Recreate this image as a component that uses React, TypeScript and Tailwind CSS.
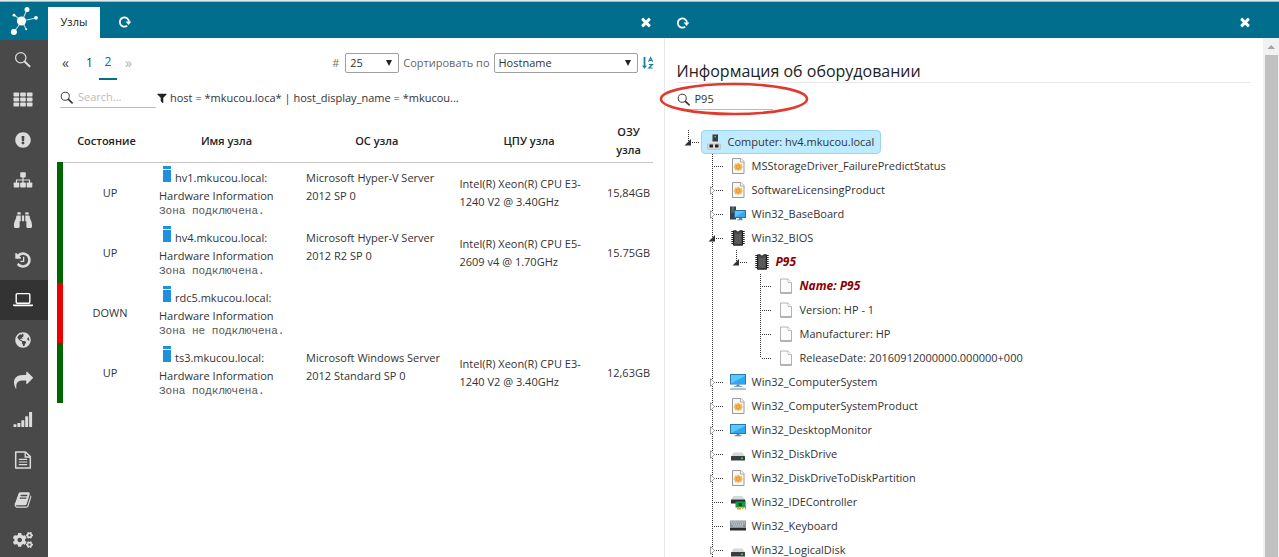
import type { ReactNode } from "react";
import { FaBinoculars, FaCogs, FaExclamationCircle, FaGlobeAmericas } from "react-icons/fa";

/* ---------- glyphs ---------- */

function Glyph({ d, className }: { d: string; className: string }) {
  return (
    <svg viewBox="0 0 1792 1792" fill="currentColor" className={className} aria-hidden="true">
      <path d={d} />
    </svg>
  );
}

const HISTORY =
  "M1664 896q0 156-61 298t-164 245-245 164-298 61q-172 0-327-72.5t-264-204.5q-7-10-6.5-22.5t8.5-20.5l137-138q10-9 25-9 16 2 23 12 73 95 179 147t225 52q104 0 198.5-40.5t163.5-109.5 109.5-163.5 40.5-198.5-40.5-198.5-109.5-163.5-163.5-109.5-198.5-40.5q-98 0-188 35.5t-160 101.5l137 138q31 30 14 69-17 40-59 40h-448q-26 0-45-19t-19-45v-448q0-42 40-59 39-17 69 14l130 129q107-101 244.5-156.5t284.5-55.5q156 0 298 61t245 164 164 245 61 298zm-640-288v448q0 14-9 23t-23 9h-320q-14 0-23-9t-9-23v-64q0-14 9-23t23-9h224v-352q0-14 9-23t23-9h64q14 0 23 9t9 23z";
const TIMES =
  "M1490 1322q0 40-28 68l-136 136q-28 28-68 28t-68-28l-294-294-294 294q-28 28-68 28t-68-28l-136-136q-28-28-28-68t28-68l294-294-294-294q-28-28-28-68t28-68l136-136q28-28 68-28t68 28l294 294 294-294q28-28 68-28t68 28l136 136q28 28 28 68t-28 68l-294 294 294 294q28 28 28 68z";
const FILTER =
  "M1595 295q17 41-14 70l-493 493v742q0 42-39 59-13 5-25 5-27 0-45-19l-256-256q-19-19-19-45v-486l-493-493q-31-29-14-70 17-39 59-39h1280q42 0 59 39z";
const SHARE =
  "M1792 640q0 26-19 45l-512 512q-19 19-45 19t-45-19-19-45v-256h-224q-98 0-175.5 6t-154 21.5-133 42.5-105.5 69.5-80 101-48.5 138.5-17.5 181q0 55 5 123 0 6 2.5 23.5t2.5 26.5q0 15-8.5 25t-23.5 10q-16 0-28-17-7-9-13-22t-13.5-30-10.5-24q-127-285-127-451 0-199 53-333 162-403 875-403h224v-256q0-26 19-45t45-19 45 19l512 512q19 19 19 45z";
const BOOK =
  "M1703 478q40 57 18 129l-275 906q-19 64-76.5 107.5t-122.5 43.5h-923q-77 0-148.5-53.5t-99.5-131.5q-24-67-2-127 0-4 3-27t4-37q1-8-3-21.5t-3-19.5q2-11 8-21t16.5-23.5 16.5-23.5q23-38 45-91.5t30-91.5q3-10 .5-30t-.5-28q3-11 17-28t17-23q21-36 42-92t25-90q1-9-2.5-32t.5-28q4-13 22-30.5t22-22.5q19-26 42.5-84.5t27.5-96.5q1-8-3-25.5t-2-26.5q2-8 9-18t18-23 17-21q8-12 16.5-30.5t15-35 16-36 19.5-32 26.5-23.5 36-11.5 47.5 5.5l-1 3q38-9 51-9h761q74 0 114 56t18 130l-274 906q-36 119-71.5 153.5t-128.5 34.5h-869q-27 0-38 15-11 16-1 43 24 70 144 70h923q29 0 56-15.5t35-41.5l300-987q7-22 5-57 38 15 59 43zm-1064 2q-4 13 2 22.5t20 9.5h608q13 0 25.5-9.5t16.5-22.5l21-64q4-13-2-22.5t-20-9.5h-608q-13 0-25.5 9.5t-16.5 22.5zm-83 256q-4 13 2 22.5t20 9.5h608q13 0 25.5-9.5t16.5-22.5l21-64q4-13-2-22.5t-20-9.5h-608q-13 0-25.5 9.5t-16.5 22.5z";

function Magnifier({ className }: { className: string }) {
  return (
    <svg viewBox="0 0 16 16" fill="none" stroke="currentColor" className={className} aria-hidden="true">
      <circle cx="6" cy="6" r="4.6" strokeWidth="1.1" />
      <path d="M9.6 9.600l4.200 4" strokeWidth="1.800" strokeLinecap="round" />
    </svg>
  );
}

function GridIcon() {
  return (
    <svg viewBox="0 0 20 16" fill="currentColor" className="h-4 w-5" aria-hidden="true">
      {[0.5, 5.5, 10.5].map((y) =>
        [0.5, 7.2, 13.9].map((x) => <rect key={`${x}-${y}`} x={x} y={y} width="5.6" height="4" rx="0.8" />),
      )}
    </svg>
  );
}

function SitemapIcon() {
  return (
    <svg viewBox="0 0 20 16" className="h-4 w-5" aria-hidden="true">
      <path d="M10 5v6M3.5 11V8h13v3" fill="none" stroke="currentColor" strokeWidth="1.2" />
      <g fill="currentColor">
        <rect x="7.2" y="0.2" width="5.6" height="5.2" rx="0.8" />
        <rect x="0.7" y="10.4" width="5.6" height="5.2" rx="0.8" />
        <rect x="7.2" y="10.4" width="5.6" height="5.2" rx="0.8" />
        <rect x="13.7" y="10.4" width="5.6" height="5.2" rx="0.8" />
      </g>
    </svg>
  );
}

function LaptopIcon() {
  return (
    <svg viewBox="0 0 20 16" className="h-4 w-5" aria-hidden="true">
      <rect x="3.2" y="1.6" width="13.600" height="9.600" rx="1" fill="none" stroke="currentColor" strokeWidth="1.400" />
      <path d="M0 12.400h20v1q0 .8-1.200.8H1.200Q0 14.200 0 13.400z" fill="currentColor" />
    </svg>
  );
}

function SignalIcon() {
  return (
    <svg viewBox="0 0 20 16" fill="currentColor" className="h-4 w-5" aria-hidden="true">
      <rect x="0.500" y="12.300" width="3" height="2.700" rx="0.400" />
      <rect x="4.400" y="11" width="3" height="4" rx="0.400" />
      <rect x="8.300" y="8.200" width="3" height="6.800" rx="0.400" />
      <rect x="12.200" y="4.300" width="3" height="10.700" rx="0.400" />
      <rect x="16.100" y="-0.500" width="3" height="15.500" rx="0.400" />
    </svg>
  );
}

function FileTextIcon() {
  return (
    <svg viewBox="0 0 18 18" fill="none" stroke="currentColor" className="size-[18px]" aria-hidden="true">
      <path d="M1.700 1h9.800l4.800 4.600V17H1.700z" strokeWidth="1.500" strokeLinejoin="round" />
      <path d="M11.200 1v5h5" strokeWidth="1.300" />
      <path d="M4.800 8.300h8.400M4.800 11h8.400M4.800 13.700h8.400" strokeWidth="1.200" />
    </svg>
  );
}

function Logo() {
  return (
    <svg viewBox="0 0 28 30" className="h-[30px] w-7" aria-hidden="true">
      <path d="M12 15L17 3.500M12 15L26 12M12 15L4 9M12 15L4 26M12 15L16 23" stroke="#b9dbe4" strokeWidth="1.100" />
      <g fill="#fff">
        <circle cx="11.500" cy="15" r="4.600" />
        <circle cx="17" cy="3.500" r="2.500" />
        <circle cx="26" cy="11.800" r="1.900" />
        <circle cx="4" cy="9.200" r="1.400" />
        <circle cx="3.900" cy="26" r="3" />
        <circle cx="16.200" cy="23.200" r="1" />
      </g>
    </svg>
  );
}

function RefreshIcon() {
  return (
    <svg viewBox="0 0 14 14" className="size-3.5" aria-hidden="true">
      <path d="M9.200 10.700A4.600 4.600 0 1 1 11 6.600" fill="none" stroke="#fff" strokeWidth="1.800" />
      <path d="M7.600 6.500h5.800l-2.900 3.500z" fill="#fff" />
    </svg>
  );
}

function SortIcon() {
  return (
    <svg viewBox="0 0 12 14" className="h-3.5 w-3" fill="none" stroke="#1581a0" aria-hidden="true">
      <path d="M2.500 1v10" strokeWidth="1.800" />
      <path d="M0 9.700h5l-2.500 3z" fill="#1581a0" stroke="none" />
      <path d="M6.500 5.700L8.600 1.500l2.100 4.200M7.200 4.400h2.800" strokeWidth="1.100" />
      <path d="M6.900 8.500h3.500L6.900 12h3.700" strokeWidth="1.200" />
    </svg>
  );
}

/* ---------- tree pictures ---------- */

type Picture = "host" | "class" | "board" | "chip" | "page" | "system" | "monitor" | "disk" | "ide" | "keyboard";

const pictures: Record<Picture, ReactNode> = {
  host: (
    <>
      <rect x="6.500" y="0.500" width="5.500" height="8" fill="#3c3c3c" />
      <rect x="8.500" y="2" width="1.500" height="1.500" fill="#3fd04a" />
      <path d="M3 7.500h9.500l1.800 3v5H1.700v-5z" fill="#e2e2e2" />
      <path d="M1.700 10h12.600v5.300H1.700z" fill="#dcdcdc" stroke="#a5a5a5" strokeWidth="0.500" />
      <rect x="3.500" y="10.500" width="3.500" height="3" fill="#222" />
      <rect x="9" y="10.500" width="3.500" height="3" fill="#222" />
    </>
  ),
  class: (
    <>
      <path d="M2.500.5h8.500l3 3v12H2.500z" fill="#f7f7f7" stroke="#9a9a9a" />
      <path d="M10.500.5v3.500H14" fill="#fff" stroke="#9a9a9a" strokeWidth="0.800" />
      <path d="M8.200 4.500l1.200 1.300 2-.3.300 2 1.200 1.400-1.200 1.400-.3 2-2-.3-1.200 1.300L7 12l-2 .3-.3-2-1.200-1.400 1.200-1.400.3-2 2 .3z" fill="#f2b655" />
      <circle cx="8.200" cy="8.900" r="1.700" fill="none" stroke="#cf9038" strokeWidth="0.800" />
    </>
  ),
  board: (
    <>
      <rect x="0" y="0.500" width="6" height="13" fill="#3d4043" />
      <rect x="2" y="1.500" width="2" height="1" fill="#2fe04f" />
      <path d="M1 4h3.500M1 6h3.500" stroke="#8b8f92" strokeWidth="0.700" />
      <rect x="4.500" y="4.500" width="11" height="7" fill="#5cc4fb" stroke="#2d6f9c" />
      <path d="M5 11l10-6v6z" fill="#37a9f0" />
      <path d="M9 12h3v1.500h-3zM7 13.500h6v.8H7z" fill="#5f86a5" />
    </>
  ),
  chip: (
    <>
      <path d="M2.200 1v14M13.800 1v14" stroke="#222" strokeWidth="1.800" strokeDasharray="1 1" />
      <path d="M3.500.8H6q2 2.800 4 0h2.500v14.400h-9z" fill="#4a4a4a" stroke="#111" strokeWidth="0.900" />
      <path d="M5 4h6v9.500H5z" fill="#5a5a5a" />
    </>
  ),
  page: (
    <>
      <path d="M2.500 1h7.500l3.500 3.500V15h-11z" fill="#fcfcfc" stroke="#a9a9a9" strokeWidth="0.900" />
      <path d="M10 1v3.500h3.500" fill="#fff" stroke="#b5b5b5" strokeWidth="0.800" />
      <path d="M2.500 15h11" stroke="#7d8794" strokeWidth="0.900" />
    </>
  ),
  system: (
    <>
      <rect x="0.500" y="0.500" width="15" height="9.500" fill="#5dc8ff" stroke="#2878b0" />
      <path d="M1 9.500L15 2v7.500z" fill="#2fa8f2" />
      <path d="M6.500 10.500h3v1.500h-3zM4 12h8v.8H4z" fill="#5a87ad" />
      <path d="M1 13.700h14l1 1.500H0z" fill="#c4d2dc" />
      <path d="M0 15.200h16" stroke="#6fa0bd" strokeWidth="0.800" />
    </>
  ),
  monitor: (
    <>
      <rect x="0.500" y="2.500" width="15" height="9" fill="#5dc8ff" stroke="#2878b0" />
      <path d="M1 11L15 4v7z" fill="#2fa8f2" />
      <path d="M6.500 12h3v1.200h-3zM4.500 13.200h7v1h-7z" fill="#5a87ad" />
    </>
  ),
  disk: (
    <>
      <path d="M3.500 6.500h9l2.500 4H1z" fill="#d6d9da" />
      <rect x="1" y="10" width="14" height="4.500" rx="0.500" fill="#3a3d3f" />
      <rect x="11" y="11.500" width="1.800" height="1.500" fill="#3ee04a" />
    </>
  ),
  ide: (
    <>
      <path d="M3.500 2h9l2.500 3.500H1z" fill="#d6d9da" />
      <rect x="1" y="5.500" width="14" height="4" fill="#2c2f31" />
      <rect x="5.500" y="7.500" width="9.500" height="6" fill="#1c9a4a" />
      <rect x="8.500" y="9" width="3.500" height="3" fill="#124d2a" />
      <path d="M7 13.500h4v2H7zM12 13.500h1.500v1.500H12z" fill="#e8a51c" />
      <path d="M15.500 6.500v9" stroke="#999" />
    </>
  ),
  keyboard: (
    <>
      <rect x="0" y="2.500" width="16" height="8" fill="#8c9399" />
      <rect x="0" y="10" width="16" height="2.500" fill="#272c33" />
      <path d="M1 4h14M1.500 6h13M3 8h10" stroke="#e3e7ea" strokeWidth="1" strokeDasharray="1.400 0.700" />
    </>
  ),
};

function TreePicture({ name }: { name: Picture }) {
  return (
    <svg viewBox="0 0 16 16" className="size-4 shrink-0" aria-hidden="true">
      {pictures[name]}
    </svg>
  );
}

/* ---------- tree ---------- */

type Node = {
  label: string;
  icon: Picture;
  state?: "open" | "closed";
  hit?: boolean;
  selected?: boolean;
  /* One guide per column: "|" runs past, "+" branches, "L" ends, " " is blank. */
  guides: string;
};

const nodes: Node[] = [
  { guides: "L", label: "Computer: hv4.mkucou.local", icon: "host", state: "open", selected: true },
  { guides: " +", label: "MSStorageDriver_FailurePredictStatus", icon: "class" },
  { guides: " +", label: "SoftwareLicensingProduct", icon: "class", state: "closed" },
  { guides: " +", label: "Win32_BaseBoard", icon: "board", state: "closed" },
  { guides: " +", label: "Win32_BIOS", icon: "chip", state: "open" },
  { guides: " |L", label: "P95", icon: "chip", state: "open", hit: true },
  { guides: " | +", label: "Name: P95", icon: "page", hit: true },
  { guides: " | +", label: "Version: HP - 1", icon: "page" },
  { guides: " | +", label: "Manufacturer: HP", icon: "page" },
  { guides: " | L", label: "ReleaseDate: 20160912000000.000000+000", icon: "page" },
  { guides: " +", label: "Win32_ComputerSystem", icon: "system", state: "closed" },
  { guides: " +", label: "Win32_ComputerSystemProduct", icon: "class", state: "closed" },
  { guides: " +", label: "Win32_DesktopMonitor", icon: "monitor", state: "closed" },
  { guides: " +", label: "Win32_DiskDrive", icon: "disk", state: "closed" },
  { guides: " +", label: "Win32_DiskDriveToDiskPartition", icon: "class", state: "closed" },
  { guides: " +", label: "Win32_IDEController", icon: "ide" },
  { guides: " +", label: "Win32_Keyboard", icon: "keyboard" },
  { guides: " +", label: "Win32_LogicalDisk", icon: "disk", state: "closed" },
];

function Guide({ kind, state }: { kind: string; state?: "open" | "closed" }) {
  return (
    <svg viewBox="0 0 24 24" className="size-6 shrink-0" aria-hidden="true">
      <g stroke="#333" strokeDasharray="1 1" shapeRendering="crispEdges">
        {(kind === "|" || kind === "+") && <path d="M12.500 0v24" />}
        {kind === "L" && <path d="M12.500 0v12" />}
        {(kind === "+" || kind === "L") && <path d="M14 12.500h11" />}
      </g>
      {state === "open" && <path d="M15 9v6.500H8.500z" fill="#333" />}
      {state === "closed" && <path d="M10.500 8.500v8l4-4z" fill="#fff" stroke="#999" strokeWidth="0.900" />}
    </svg>
  );
}

function TreeRow({ node }: { node: Node }) {
  const cells = node.guides.split("");
  return (
    <li className="flex h-6 items-center whitespace-nowrap">
      {cells.map((kind, i) => (
        <Guide key={i} kind={kind} state={i === cells.length - 1 ? node.state : undefined} />
      ))}
      <a
        href="#node"
        className={
          node.selected
            ? "ml-px flex h-6 items-center gap-1.5 rounded-sm border border-[#9fd4ee] bg-[#beebff] pr-1.5 pl-1"
            : node.hit
              ? "flex h-6 items-center gap-1.5 pl-1.5 text-xs font-bold text-[#8b0000] italic"
              : "flex h-6 items-center gap-1.5 pl-1.5"
        }
      >
        <TreePicture name={node.icon} />
        <span>{node.label}</span>
      </a>
    </li>
  );
}

/* ---------- data ---------- */

const hosts = [
  { up: true, name: "hv1.mkucou.local:", zone: "Зона подключена.", os: "Microsoft Hyper-V Server 2012 SP 0", cpu: ["Intel(R) Xeon(R) CPU E3-", "1240 V2 @ 3.40GHz"], ram: "15,84GB" },
  { up: true, name: "hv4.mkucou.local:", zone: "Зона подключена.", os: "Microsoft Hyper-V Server 2012 R2 SP 0", cpu: ["Intel(R) Xeon(R) CPU E5-", "2609 v4 @ 1.70GHz"], ram: "15.75GB" },
  { up: false, name: "rdc5.mkucou.local:", zone: "Зона не подключена.", os: "", cpu: [], ram: "" },
  { up: true, name: "ts3.mkucou.local:", zone: "Зона подключена.", os: "Microsoft Windows Server 2012 Standard SP 0", cpu: ["Intel(R) Xeon(R) CPU E3-", "1240 V2 @ 3.40GHz"], ram: "12,63GB" },
];

const menu: { label: string; icon: ReactNode; active?: boolean }[] = [
  { label: "Поиск", icon: <Magnifier className="size-[18px]" /> },
  { label: "Таблица", icon: <GridIcon /> },
  { label: "События", icon: <FaExclamationCircle className="size-4" /> },
  { label: "Топология", icon: <SitemapIcon /> },
  { label: "Обзор", icon: <FaBinoculars className="size-[18px]" /> },
  { label: "История", icon: <Glyph d={HISTORY} className="size-[18px]" /> },
  { label: "Узлы", icon: <LaptopIcon />, active: true },
  { label: "Сеть", icon: <FaGlobeAmericas className="size-4" /> },
  { label: "Передача", icon: <Glyph d={SHARE} className="size-[19px]" /> },
  { label: "Графики", icon: <SignalIcon /> },
  { label: "Отчёты", icon: <FileTextIcon /> },
  { label: "Журнал", icon: <Glyph d={BOOK} className="size-[18px]" /> },
  { label: "Настройки", icon: <FaCogs className="size-5" /> },
];

/* ---------- page ---------- */

function Select({ label, value, className }: { label: string; value: string; className: string }) {
  return (
    <span className={className}>
      <select
        aria-label={label}
        defaultValue={value}
        className="h-5 w-full appearance-none rounded-xs border border-[#a0a0a0] bg-white pl-1 text-[#333]"
      >
        <option>{value}</option>
      </select>
      <svg viewBox="0 0 6 6" className="pointer-events-none absolute top-[7px] right-[7px] size-1.5" aria-hidden="true">
        <path d="M0 0h6L3 6z" fill="#222" />
      </svg>
    </span>
  );
}

function Sidebar() {
  return (
    <nav className="flex w-12 shrink-0 flex-col bg-[#494949] text-[#dcdcdc]">
      <a href="#home" aria-label="Home" className="flex h-[38px] shrink-0 items-center justify-center bg-[#006e8c]">
        <Logo />
      </a>
      {menu.map((item) => (
        <a
          key={item.label}
          href="#menu"
          aria-label={item.label}
          className={
            item.active
              ? "flex h-10 shrink-0 items-center justify-center bg-[#333] pr-0.5 text-white"
              : "flex h-10 shrink-0 items-center justify-center pr-0.5"
          }
        >
          {item.icon}
        </a>
      ))}
    </nav>
  );
}

function HostsPanel() {
  return (
    <section className="flex min-w-0 flex-col">
      <header className="flex h-9 shrink-0 items-center bg-[#006e8c] pr-[11px]">
        <a href="#hosts" className="flex h-[31px] w-[52px] items-center justify-center self-end bg-white text-[#222]">
          Узлы
        </a>
        <button aria-label="Обновить" className="ml-[17px] p-px pt-[5px]">
          <RefreshIcon />
        </button>
        <button aria-label="Закрыть" className="ml-auto pt-1 text-white">
          <Glyph d={TIMES} className="size-3.5" />
        </button>
      </header>

      <div className="flex h-[50px] items-center pr-2.5 pl-[14px]">
        <div className="flex h-[34px] items-center self-start pt-4 text-xs">
          <a href="#first" className="w-[18px] text-sm text-[#444]">«</a>
          <a href="#p1" className="w-[19px] text-center">1</a>
          <a href="#p2" className="flex h-[34px] w-[18px] items-center justify-center border-b-2 border-[#006e8c] text-[#006e8c]">
            2
          </a>
          <span className="pl-2 text-sm text-[#b0b0b0]">»</span>
        </div>
        <span className="mr-1.5 ml-auto text-[#777]">#</span>
        <Select label="#" value="25" className="relative w-[54px]" />
        <span className="ml-1 text-[#666]">Сортировать по</span>
        <Select label="Сортировать по" value="Hostname" className="relative ml-1 w-36" />
        <a href="#sort" aria-label="Сортировка" className="ml-1">
          <SortIcon />
        </a>
      </div>

      <div className="flex items-center pl-3">
        <label className="flex h-5 w-24 items-center gap-1 border-b border-[#bbb]">
          <Magnifier className="size-3.5 shrink-0" />
          <input aria-label="Search" placeholder="Search..." className="w-full min-w-0 outline-none placeholder:text-[#bbb]" />
        </label>
        <Glyph d={FILTER} className="size-3 shrink-0 text-[#222]" />
        <span className="ml-0.5">host = *mkucou.loca* | host_display_name = *mkucou...</span>
      </div>

      <div className="pt-[13px] pr-[11px] pl-[9px]">
        <table className="w-full table-fixed border-collapse">
          <colgroup>
            <col className="w-[93px]" />
            <col className="w-[147px]" />
            <col />
            <col className="w-[151px]" />
            <col className="w-12" />
          </colgroup>
          <thead>
            <tr className="h-[41px] border-b border-[#c4c4c4] leading-[18px] text-[#222]">
              <th className="font-semibold">Состояние</th>
              <th className="font-semibold">Имя узла</th>
              <th className="font-semibold">ОС узла</th>
              <th className="font-semibold">ЦПУ узла</th>
              <th className="font-semibold">ОЗУ узла</th>
            </tr>
          </thead>
          <tbody>
            {hosts.map((h) => (
              <tr key={h.name} className="h-[60px] leading-[18px]">
                <td className={h.up ? "border-l-6 border-[#006600] pl-1 text-center" : "border-l-6 border-[#ee0000] pl-1 text-center"}>
                  {h.up ? "UP" : "DOWN"}
                </td>
                <td className="pt-[3px] pb-1.5 pl-1.5 align-top whitespace-nowrap">
                  <div className="flex h-[21px] gap-1 pl-1">
                    <svg viewBox="0 0 8 16" className="h-4 w-2" aria-hidden="true">
                      <path d="M0 0h8v3H0zM0 4h8v12H0z" fill="#2090dd" />
                    </svg>
                    <span className="self-end">{h.name}</span>
                  </div>
                  <div>Hardware Information</div>
                  <div className="font-['Liberation_Mono',monospace] text-[11px] leading-3 text-[#555]">{h.zone}</div>
                </td>
                <td className="px-1.5 pt-1.5 align-top">{h.os}</td>
                <td className="pl-1.5 whitespace-nowrap">
                  {h.cpu.map((line) => (
                    <div key={line}>{line}</div>
                  ))}
                </td>
                <td className="text-center">{h.ram}</td>
              </tr>
            ))}
          </tbody>
        </table>
      </div>
    </section>
  );
}

function HardwarePanel() {
  return (
    <section className="flex min-w-0 flex-col">
      <header className="flex h-9 shrink-0 items-center justify-between bg-[#006e8c] pr-[27px] pl-3">
        <button aria-label="Обновить" className="pt-[5px]">
          <RefreshIcon />
        </button>
        <button aria-label="Закрыть" className="pt-1 text-white">
          <Glyph d={TIMES} className="size-3.5" />
        </button>
      </header>
      <div className="flex min-h-0 flex-1 border-l border-[#e8e8e8]">
        <div className="min-w-0 flex-1 px-3">
          <h1 className="border-b border-[#e8e8e8] pt-[23px] text-base leading-[21px] font-normal text-[#222]">
            Информация об оборудовании
          </h1>
          <div className="relative pt-[7px]">
            <label className="flex h-5 w-24 items-center gap-1 border-b border-[#bbb]">
              <Magnifier className="size-3.5 shrink-0" />
              <input aria-label="Поиск" defaultValue="P95" className="w-full min-w-0 outline-none" />
            </label>
            <svg viewBox="0 0 150 34" className="pointer-events-none absolute -top-px -left-[18px] h-[34px] w-[150px]" aria-hidden="true">
              <ellipse cx="75" cy="17" rx="73" ry="15" fill="none" stroke="#e03a2f" strokeWidth="2.600" />
            </svg>
          </div>
          <ul className="-ml-px pt-5">
            {nodes.map((n) => (
              <TreeRow key={n.label} node={n} />
            ))}
          </ul>
        </div>
        <div className="flex w-4 shrink-0 flex-col items-center bg-[#f1f1f1]">
          <svg viewBox="0 0 16 17" className="h-[17px] w-4 shrink-0" aria-hidden="true">
            <path d="M4.500 11h7.500L8.200 7z" fill="#a3a3a3" />
          </svg>
          <div className="w-[13px] flex-1 bg-[#c1c1c1]" />
        </div>
      </div>
    </section>
  );
}

export default function App() {
  return (
    <div className="flex h-screen flex-col overflow-hidden bg-white font-['Open_Sans','Noto_Sans',sans-serif] text-[11px] text-[#333]">
      <div className="h-0.5 shrink-0 border-b border-[#a9b8b5] bg-[#e6eae8]" />
      <div className="flex min-h-0 flex-1">
        <Sidebar />
        <main className="grid min-w-0 flex-1 grid-cols-2 grid-rows-[minmax(0,1fr)] bg-linear-to-b from-[#006e8c] from-[36px] to-white to-[36px]">
          <HostsPanel />
          <HardwarePanel />
        </main>
      </div>
    </div>
  );
}
